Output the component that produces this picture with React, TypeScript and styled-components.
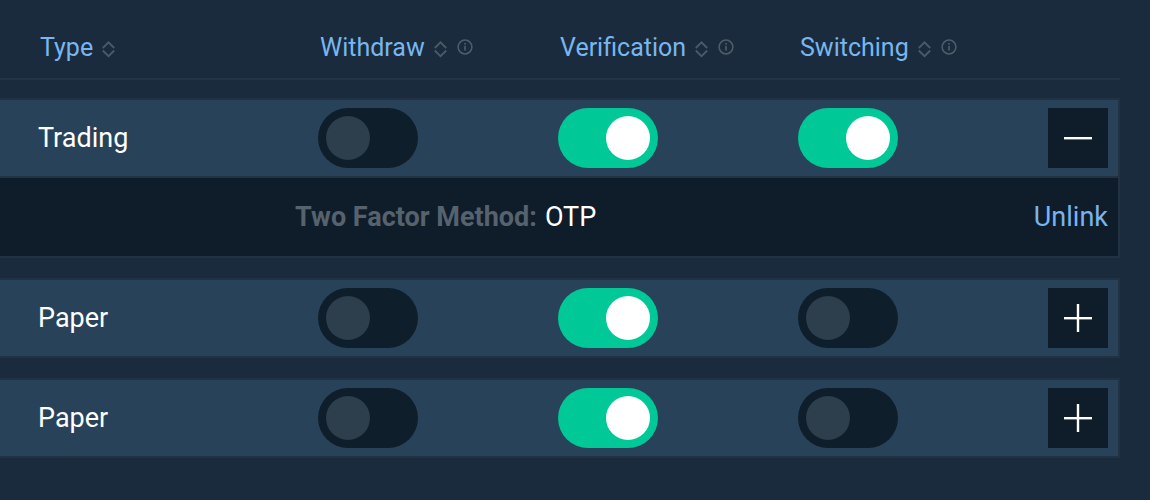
import React from "react";
import styled, { createGlobalStyle } from "styled-components";

const Global = createGlobalStyle`
  html, body { margin: 0; padding: 0; background: #1a2b3d; overflow: hidden; }
  body { font-family: Roboto, "Noto Sans", sans-serif; -webkit-font-smoothing: antialiased; }
`;

const Page = styled.div`
  width: 1150px;
  height: 500px;
  background: #1a2b3d;
  padding-right: 30px;
  box-sizing: border-box;
`;

const Header = styled.div`
  display: grid;
  grid-template-columns: 280px 240px 240px 1fr;
  align-items: center;
  height: 80px;
  box-sizing: border-box;
  padding-left: 40px;
  padding-top: 16px;
  border-bottom: 2px solid #243445;
`;

const HeadCell = styled.div`
  display: flex;
  align-items: center;
  color: #79b6ef;
  font-size: 25px;
  line-height: 1;
`;

const HeadLabel = styled.span`
  margin-right: 8px;
`;

const IconWrap = styled.span<{ $down?: number }>`
  display: inline-flex;
  margin-right: 9px;
  position: relative;
  top: ${(p) => p.$down ?? 0}px;
`;

const List = styled.div`
  display: flex;
  flex-direction: column;
  gap: 20px;
  padding-top: 18px;
  margin-left: -2px;
`;

const Card = styled.div`
  border: 2px solid #213243;
  background: #284359;
`;

const Row = styled.div`
  display: grid;
  grid-template-columns: 280px 240px 240px 1fr;
  align-items: center;
  height: 76px;
  padding-left: 40px;
  padding-right: 10px;
`;

const TypeName = styled.div`
  color: #ffffff;
  font-size: 27px;
  margin-left: -2px;
`;

const ToggleTrack = styled.div<{ $on: boolean }>`
  width: 100px;
  height: 60px;
  border-radius: 30px;
  background: ${(p) => (p.$on ? "#00c896" : "#0f1e2b")};
  display: flex;
  align-items: center;
  justify-content: ${(p) => (p.$on ? "flex-end" : "flex-start")};
  padding: 0 8px;
  box-sizing: border-box;
  margin-left: -2px;
`;

const Knob = styled.div<{ $on: boolean }>`
  width: 44px;
  height: 44px;
  border-radius: 50%;
  background: ${(p) => (p.$on ? "#ffffff" : "#2d3e4d")};
`;

const ActionCell = styled.div`
  display: flex;
  align-items: center;
`;

const Spacer = styled.div`
  flex: 1;
`;

const SquareButton = styled.button`
  width: 60px;
  height: 60px;
  background: #0f1c29;
  border: none;
  padding: 0;
  display: flex;
  align-items: center;
  justify-content: center;
  cursor: pointer;
`;

const Detail = styled.div`
  display: flex;
  align-items: center;
  height: 78px;
  background: #0f1d2a;
  border-top: 2px solid #213243;
  padding-left: 295px;
  padding-right: 10px;
  font-size: 27px;
`;

const DetailLabel = styled.span`
  color: #56626d;
  font-weight: 700;
  margin-right: 8px;
`;

const DetailValue = styled.span`
  color: #ffffff;
  flex: 1;
`;

const UnlinkLink = styled.a`
  color: #78b5ee;
  text-decoration: none;
  cursor: pointer;
`;

const SortIcon = () => (
  <svg width="15" height="18" viewBox="0 0 15 18" fill="none">
    <path d="M1.8 8 L7.5 2.3 L13.2 8" stroke="#4c5a67" strokeWidth="1.8" />
    <path d="M1.8 10.5 L7.5 16.2 L13.2 10.5" stroke="#4c5a67" strokeWidth="1.8" />
  </svg>
);

const InfoIcon = () => (
  <svg width="16" height="16" viewBox="0 0 16 16" fill="none">
    <circle cx="8" cy="8" r="6.9" stroke="#4f5d6a" strokeWidth="1.5" />
    <rect x="7.2" y="6.8" width="1.6" height="4.8" fill="#4f5d6a" />
    <rect x="7.2" y="4" width="1.6" height="1.6" fill="#4f5d6a" />
  </svg>
);

const MinusIcon = () => (
  <svg width="28" height="28" viewBox="0 0 28 28">
    <rect x="0" y="13" width="28" height="2.4" fill="#ffffff" />
  </svg>
);

const PlusIcon = () => (
  <svg width="28" height="28" viewBox="0 0 28 28">
    <rect x="0" y="13" width="28" height="2.4" fill="#ffffff" />
    <rect x="12.8" y="0" width="2.4" height="28" fill="#ffffff" />
  </svg>
);

const Toggle = ({ on }: { on: boolean }) => (
  <ToggleTrack $on={on}>
    <Knob $on={on} />
  </ToggleTrack>
);

type Item = {
  name: string;
  withdraw: boolean;
  verification: boolean;
  switching: boolean;
  expanded: boolean;
};

const items: Item[] = [
  { name: "Trading", withdraw: false, verification: true, switching: true, expanded: true },
  { name: "Paper", withdraw: false, verification: true, switching: false, expanded: false },
  { name: "Paper", withdraw: false, verification: true, switching: false, expanded: false },
];

const columns = ["Withdraw", "Verification", "Switching"];

export default function App() {
  return (
    <Page>
      <Global />
      <Header>
        <HeadCell>
          <HeadLabel>Type</HeadLabel>
          <IconWrap $down={2}><SortIcon /></IconWrap>
        </HeadCell>
        {columns.map((c) => (
          <HeadCell key={c}>
            <HeadLabel>{c}</HeadLabel>
            <IconWrap $down={2}><SortIcon /></IconWrap>
            <IconWrap><InfoIcon /></IconWrap>
          </HeadCell>
        ))}
      </Header>
      <List>
        {items.map((it, i) => (
          <Card key={i}>
            <Row>
              <TypeName>{it.name}</TypeName>
              <Toggle on={it.withdraw} />
              <Toggle on={it.verification} />
              <ActionCell>
                <Toggle on={it.switching} />
                <Spacer />
                <SquareButton>{it.expanded ? <MinusIcon /> : <PlusIcon />}</SquareButton>
              </ActionCell>
            </Row>
            {it.expanded && (
              <Detail>
                <DetailLabel>Two Factor Method:</DetailLabel>
                <DetailValue>OTP</DetailValue>
                <UnlinkLink>Unlink</UnlinkLink>
              </Detail>
            )}
          </Card>
        ))}
      </List>
    </Page>
  );
}
